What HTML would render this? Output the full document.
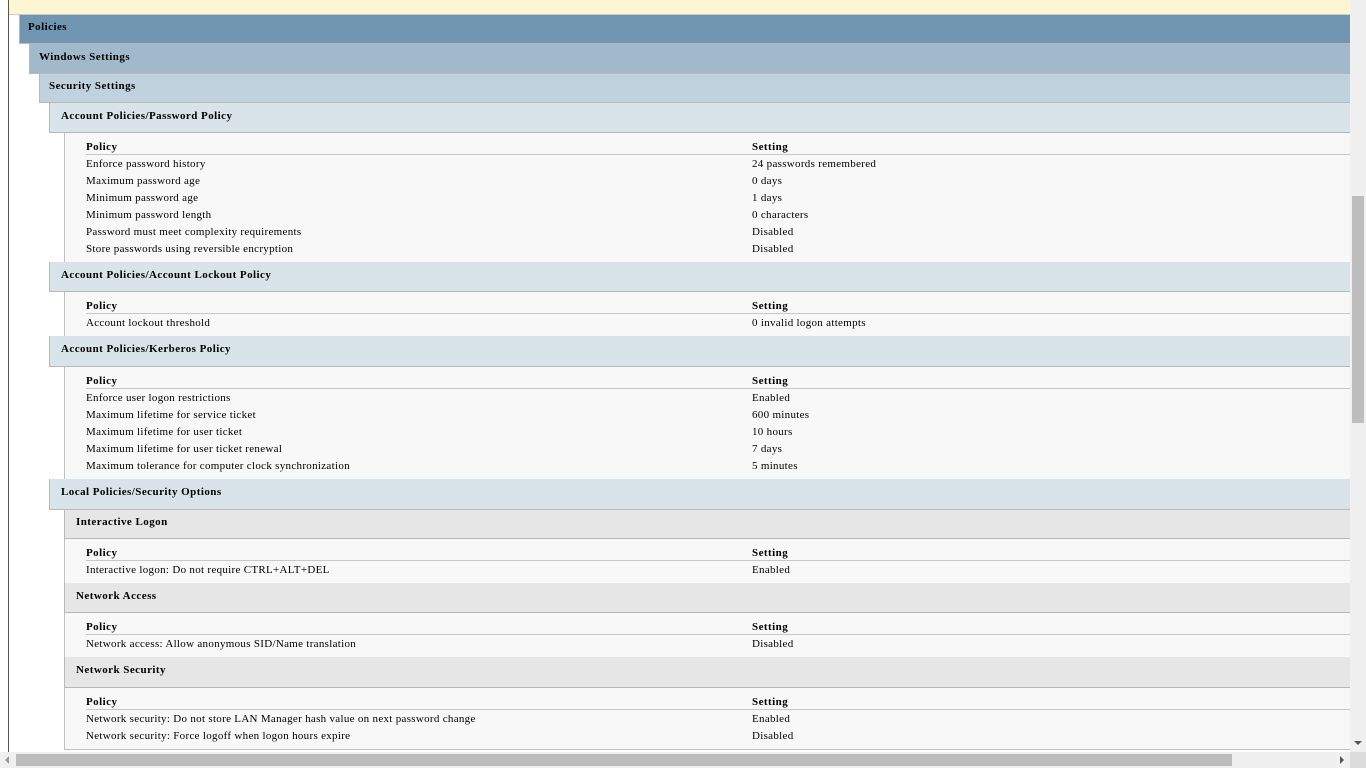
<!DOCTYPE html>
<html><head><style>
body{margin:0;width:1366px;height:768px;overflow:hidden;background:#fff;font-family:"Liberation Serif",serif;font-size:11px;color:#000;position:relative;letter-spacing:0.3px}
.a{position:absolute}
.h{position:absolute;right:16px;font-weight:bold;box-sizing:border-box;border-bottom:1px solid #b8b8b8;border-left:1px solid #b8b8b8;letter-spacing:0.45px}
.h span{position:absolute;top:50%;transform:translateY(-50%);margin-top:-2px}
.c{position:absolute;left:64px;right:16px;background:#f8f8f8;border-left:1px solid #c0c0c0;border-bottom:1px solid #c0c0c0;box-sizing:border-box}
.t{position:absolute;white-space:nowrap;line-height:12px;margin-top:1px}
.b{font-weight:bold;letter-spacing:0.45px}
.ln{position:absolute;left:86px;right:16px;height:1px;background:#c8c8c8}
</style></head><body>
<div class="a" style="left:8px;top:0;width:1px;height:752px;background:#555"></div>
<div class="a" style="left:9px;top:0;width:1341px;height:14px;background:#fdf6d3;border-bottom:1px solid #ccc"></div>
<div class="h" style="left:19px;top:15px;height:29px;background:#7096b1"><span style="left:8px">Policies</span></div>
<div class="h" style="left:29px;top:44px;height:30px;background:#a2b9cb"><span style="left:9px">Windows Settings</span></div>
<div class="h" style="left:39px;top:74px;height:29px;background:#c0d2de"><span style="left:9px">Security Settings</span></div>

<div class="h" style="left:49px;top:103px;height:30px;background:#d9e3ea"><span style="left:11px">Account Policies/Password Policy</span></div>
<div class="c" style="top:133px;height:130px"></div>
<div class="h" style="left:49px;top:262px;height:30px;background:#d9e3ea"><span style="left:11px">Account Policies/Account Lockout Policy</span></div>
<div class="c" style="top:292px;height:45px"></div>
<div class="h" style="left:49px;top:336px;height:31px;background:#d9e3ea"><span style="left:11px">Account Policies/Kerberos Policy</span></div>
<div class="c" style="top:367px;height:113px"></div>
<div class="h" style="left:49px;top:479px;height:31px;background:#d9e3ea"><span style="left:11px">Local Policies/Security Options</span></div>
<div class="h" style="left:64px;top:510px;height:29px;background:#e6e6e6"><span style="left:11px">Interactive Logon</span></div>
<div class="c" style="top:539px;height:45px"></div>
<div class="h" style="left:64px;top:583px;height:30px;background:#e6e6e6"><span style="left:11px">Network Access</span></div>
<div class="c" style="top:613px;height:45px"></div>
<div class="h" style="left:64px;top:657px;height:31px;background:#e6e6e6"><span style="left:11px">Network Security</span></div>
<div class="c" style="top:688px;height:62px"></div>

<div class="t b" style="left:86px;top:140px">Policy</div><div class="t b" style="left:752px;top:140px">Setting</div><div class="ln" style="top:154px"></div>
<div class="t" style="left:86px;top:157px">Enforce password history</div><div class="t" style="left:752px;top:157px">24 passwords remembered</div>
<div class="t" style="left:86px;top:174px">Maximum password age</div><div class="t" style="left:752px;top:174px">0 days</div>
<div class="t" style="left:86px;top:191px">Minimum password age</div><div class="t" style="left:752px;top:191px">1 days</div>
<div class="t" style="left:86px;top:208px">Minimum password length</div><div class="t" style="left:752px;top:208px">0 characters</div>
<div class="t" style="left:86px;top:225px">Password must meet complexity requirements</div><div class="t" style="left:752px;top:225px">Disabled</div>
<div class="t" style="left:86px;top:242px">Store passwords using reversible encryption</div><div class="t" style="left:752px;top:242px">Disabled</div>

<div class="t b" style="left:86px;top:299px">Policy</div><div class="t b" style="left:752px;top:299px">Setting</div><div class="ln" style="top:313px"></div>
<div class="t" style="left:86px;top:316px">Account lockout threshold</div><div class="t" style="left:752px;top:316px">0 invalid logon attempts</div>

<div class="t b" style="left:86px;top:374px">Policy</div><div class="t b" style="left:752px;top:374px">Setting</div><div class="ln" style="top:388px"></div>
<div class="t" style="left:86px;top:391px">Enforce user logon restrictions</div><div class="t" style="left:752px;top:391px">Enabled</div>
<div class="t" style="left:86px;top:408px">Maximum lifetime for service ticket</div><div class="t" style="left:752px;top:408px">600 minutes</div>
<div class="t" style="left:86px;top:425px">Maximum lifetime for user ticket</div><div class="t" style="left:752px;top:425px">10 hours</div>
<div class="t" style="left:86px;top:442px">Maximum lifetime for user ticket renewal</div><div class="t" style="left:752px;top:442px">7 days</div>
<div class="t" style="left:86px;top:459px">Maximum tolerance for computer clock synchronization</div><div class="t" style="left:752px;top:459px">5 minutes</div>

<div class="t b" style="left:86px;top:546px">Policy</div><div class="t b" style="left:752px;top:546px">Setting</div><div class="ln" style="top:560px"></div>
<div class="t" style="left:86px;top:563px">Interactive logon: Do not require CTRL+ALT+DEL</div><div class="t" style="left:752px;top:563px">Enabled</div>

<div class="t b" style="left:86px;top:620px">Policy</div><div class="t b" style="left:752px;top:620px">Setting</div><div class="ln" style="top:634px"></div>
<div class="t" style="left:86px;top:637px">Network access: Allow anonymous SID/Name translation</div><div class="t" style="left:752px;top:637px">Disabled</div>

<div class="t b" style="left:86px;top:695px">Policy</div><div class="t b" style="left:752px;top:695px">Setting</div><div class="ln" style="top:709px"></div>
<div class="t" style="left:86px;top:712px">Network security: Do not store LAN Manager hash value on next password change</div><div class="t" style="left:752px;top:712px">Enabled</div>
<div class="t" style="left:86px;top:729px">Network security: Force logoff when logon hours expire</div><div class="t" style="left:752px;top:729px">Disabled</div>

<div class="a" style="left:1350px;top:0;width:16px;height:752px;background:#f0f0f0"></div>
<div class="a" style="left:1352px;top:196px;width:12px;height:227px;background:#bdbdbd"></div>
<div class="a" style="left:1354px;top:741px;width:0;height:0;border-left:4px solid transparent;border-right:4px solid transparent;border-top:4px solid #555"></div>
<div class="a" style="left:0;top:752px;width:1350px;height:16px;background:#f0f0f0"></div>
<div class="a" style="left:16px;top:754px;width:1216px;height:12px;background:#bdbdbd"></div>
<div class="a" style="left:5px;top:756px;width:0;height:0;border-top:4px solid transparent;border-bottom:4px solid transparent;border-right:4px solid #999"></div>
<div class="a" style="left:1340px;top:756px;width:0;height:0;border-top:4px solid transparent;border-bottom:4px solid transparent;border-left:4px solid #555"></div>
<div class="a" style="left:1350px;top:752px;width:16px;height:16px;background:#dcdcdc"></div>
</body></html>
